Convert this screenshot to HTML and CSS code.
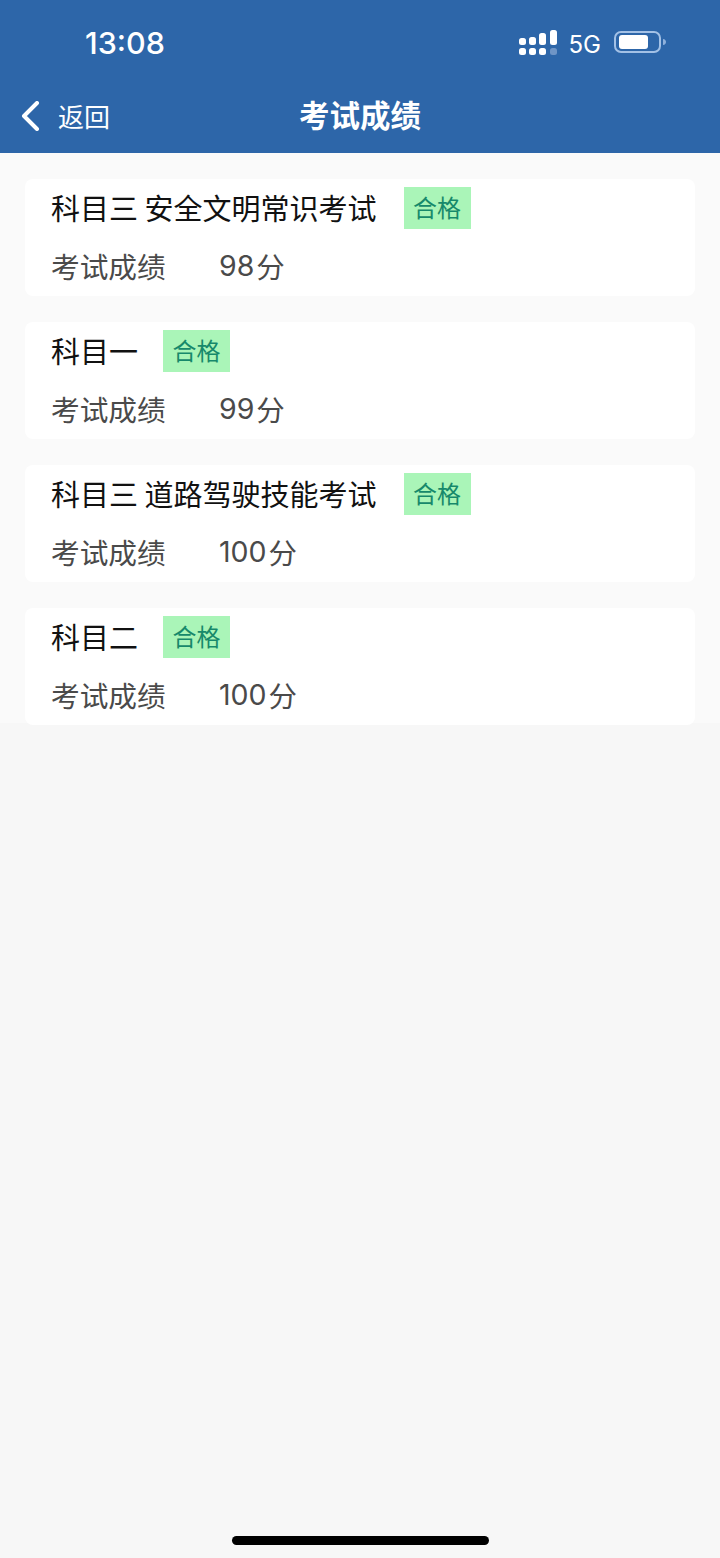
FILE: index.html
```html
<!DOCTYPE html>
<html lang="zh-CN">
<head>
    <meta charset="UTF-8">
    <meta name="viewport" content="width=device-width, initial-scale=1.0">
    <title>考试成绩</title>
    <link rel="stylesheet" href="styles.css">
</head>
<body>
    <div class="page">
        <header class="header">
            <div class="statusBar">
                <span class="time">13:08</span>
                <div class="statusIcons">
                    <svg class="signal" width="38" height="26" viewBox="0 0 38 26">
                        <rect x="0" y="8" width="7" height="7" rx="2.500" fill="#fff"/>
                        <rect x="10" y="7" width="7" height="8" rx="2.500" fill="#fff"/>
                        <rect x="20" y="3" width="7" height="12" rx="2.500" fill="#fff"/>
                        <rect x="31" y="0" width="7" height="15" rx="2.500" fill="#fff"/>
                        <rect x="0" y="18" width="7" height="7" rx="2.500" fill="#fff"/>
                        <rect x="10" y="18" width="7" height="7" rx="2.500" fill="#fff"/>
                        <rect x="20" y="18" width="7" height="7" rx="2.500" fill="#fff"/>
                        <rect x="31" y="18" width="7" height="7" rx="2.500" fill="#6f95c6"/>
                    </svg>
                    <span class="network">5G</span>
                    <svg class="battery" width="52" height="22" viewBox="0 0 52 22">
                        <rect x="1" y="1" width="45" height="20" rx="6" fill="none" stroke="#a3c1e6" stroke-width="2"/>
                        <rect x="5" y="4" width="29" height="14" rx="3" fill="#fff"/>
                        <path d="M49 8c2 0 3 1.500 3 3s-1 3-3 3z" fill="#8fb1dc"/>
                    </svg>
                </div>
            </div>
            <div class="navBar">
                <div class="back">
                    <svg width="20" height="30" viewBox="0 0 20 30">
                        <path d="M16 2 3 15l13 13" fill="none" stroke="#fff" stroke-width="4" stroke-linecap="round" stroke-linejoin="round"/>
                    </svg>
                    <span class="backText">返回</span>
                </div>
                <h1 class="navTitle">考试成绩</h1>
            </div>
        </header>

        <main class="list">
            <section class="card">
                <div class="cardTop">
                    <span class="subject subjectLong">科目三 安全文明常识考试</span>
                    <span class="badge">合格</span>
                </div>
                <div class="cardBottom">
                    <span class="scoreLabel">考试成绩</span>
                    <span class="scoreValue">98<i class="unit">分</i></span>
                </div>
            </section>
            <section class="card">
                <div class="cardTop">
                    <span class="subject">科目一</span>
                    <span class="badge">合格</span>
                </div>
                <div class="cardBottom">
                    <span class="scoreLabel">考试成绩</span>
                    <span class="scoreValue">99<i class="unit">分</i></span>
                </div>
            </section>
            <section class="card">
                <div class="cardTop">
                    <span class="subject subjectLong">科目三 道路驾驶技能考试</span>
                    <span class="badge">合格</span>
                </div>
                <div class="cardBottom">
                    <span class="scoreLabel">考试成绩</span>
                    <span class="scoreValue">100<i class="unit">分</i></span>
                </div>
            </section>
            <section class="card">
                <div class="cardTop">
                    <span class="subject">科目二</span>
                    <span class="badge">合格</span>
                </div>
                <div class="cardBottom">
                    <span class="scoreLabel">考试成绩</span>
                    <span class="scoreValue">100<i class="unit">分</i></span>
                </div>
            </section>
        </main>

        <div class="homeBar"><div class="homeIndicator"></div></div>
    </div>
</body>
</html>
```

FILE: styles.css
```css
* {
    box-sizing: border-box;
}
html, body {
    margin: 0;
    padding: 0;
}
body {
    font-family: "Noto Sans CJK SC", "Noto Sans", sans-serif;
    background-color: #f7f7f7;
}
.page {
    width: 720px;
    height: 1558px;
    display: flex;
    flex-direction: column;
}

.header {
    height: 153px;
    flex-shrink: 0;
    background-color: #2d66a9;
    color: white;
}
.statusBar {
    height: 84px;
    display: flex;
    align-items: center;
    justify-content: space-between;
    padding: 2px 54px 0 85px;
}
.time {
    font-family: Inter, "Liberation Sans", sans-serif;
    font-size: 30.500px;
    font-weight: 500;
    margin-bottom: 2px;
}
.statusIcons {
    display: flex;
    align-items: center;
}
.signal {
    margin-right: 12px;
}
.network {
    font-family: Inter, "Liberation Sans", sans-serif;
    font-size: 24px;
    margin-top: 2px;
    margin-right: 13px;
}
.battery {
    margin-bottom: 3px;
}
.navBar {
    height: 69px;
    display: flex;
    align-items: center;
    justify-content: center;
    position: relative;
}
.back {
    position: absolute;
    left: 21px;
    top: 17px;
    display: flex;
    align-items: center;
}
.back svg {
    margin-right: 17px;
}
.backText {
    font-size: 26px;
    line-height: 30px;
}
.navTitle {
    margin: 0 0 9px;
    font-size: 30.500px;
    font-weight: 700;
}

.list {
    height: 570px;
    flex-shrink: 0;
    background-color: #fafafa;
    padding: 26px 25px 0;
}
.card {
    height: 117px;
    margin-bottom: 26px;
    background-color: white;
    border-radius: 8px;
    padding: 8px 26px 0;
}
.cardTop {
    height: 42px;
    display: flex;
    align-items: center;
}
.subject {
    font-size: 29px;
    line-height: 40px;
    padding-bottom: 2px;
    color: #111;
}
.subjectLong {
    margin-right: 2px;
}
.badge {
    width: 67px;
    height: 42px;
    margin-left: 25px;
    background-color: #aaf5b8;
    color: #17896b;
    font-size: 24px;
    line-height: 40px;
    text-align: center;
}
.cardBottom {
    margin-top: 15px;
    display: flex;
    align-items: center;
    font-size: 28.700px;
    line-height: 44px;
    color: #4a4a4a;
}
.scoreLabel {
    width: 168px;
}
.scoreValue {
    font-family: Inter, "Liberation Sans", sans-serif;
    font-size: 28.500px;
    display: flex;
    align-items: center;
}
.unit {
    font-family: "Noto Sans CJK SC", sans-serif;
    font-style: normal;
    margin-left: 2px;
}

.homeBar {
    flex: 1;
    display: flex;
    justify-content: center;
    align-items: flex-end;
    padding-bottom: 13px;
}
.homeIndicator {
    width: 257px;
    height: 9px;
    border-radius: 5px;
    background-color: black;
}
```
